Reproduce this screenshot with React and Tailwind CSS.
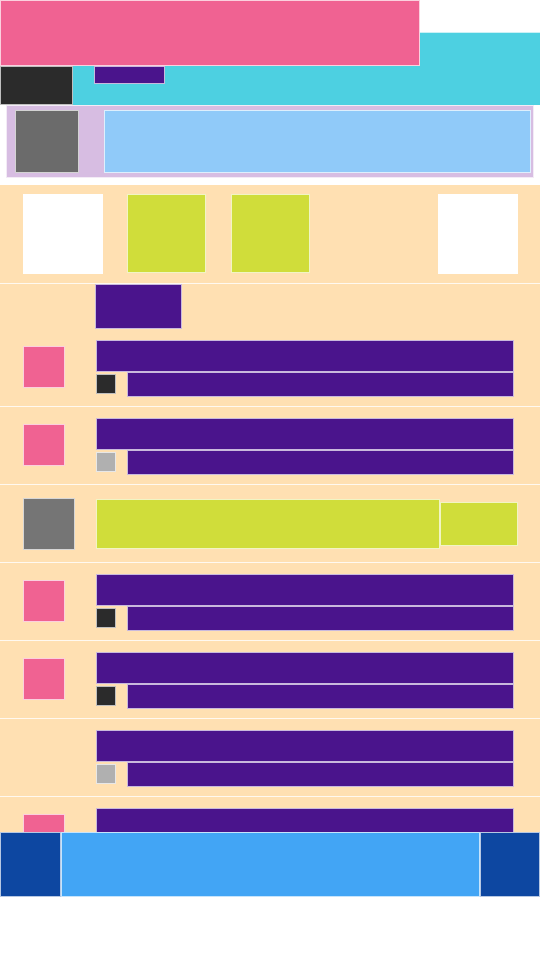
import React from 'react';

const line = 'border border-white/70';

const Item = ({ marker = 'pink', chip = 'dark' }) => (
    <div className="relative h-[78px] border-b border-white/80 flex">
        <div className="w-[96px] shrink-0 pl-[23px] pt-[17px]">
            {marker === 'pink' && <div className={`w-[42px] h-[42px] bg-[#f06292] ${line}`} />}
        </div>
        <div className="w-[418px] pt-[11px] flex flex-col">
            <div className={`h-[32px] bg-[#4a148c] ${line}`} />
            <div className="flex gap-[11px]">
                <div className={`w-[20px] h-[20px] mt-[2px] ${chip === 'dark' ? 'bg-[#2b2b2b]' : 'bg-[#b0b0b0]'} ${line}`} />
                <div className={`flex-1 h-[25px] bg-[#4a148c] ${line}`} />
            </div>
        </div>
    </div>
);

const LimeItem = () => (
    <div className="h-[78px] border-b border-white/80 flex">
        <div className="w-[96px] shrink-0 pl-[23px] pt-[13px]">
            <div className={`w-[52px] h-[52px] bg-[#757575] ${line}`} />
        </div>
        <div className="flex items-start pt-[14px]">
            <div className={`w-[344px] h-[50px] bg-[#d0dd3a] ${line}`} />
            <div className={`w-[78px] h-[44px] mt-[3px] bg-[#d0dd3a] ${line}`} />
        </div>
    </div>
);

export default function App() {
    return (
        <div className="w-[540px] h-[960px] bg-white overflow-hidden">
            {/* Header */}
            <div className="flex">
                <div className={`w-[420px] h-[66px] bg-[#f06292] ${line}`} />
                <div className="flex-1 mt-[32px] bg-[#4dd0e1] border-t border-white/70" />
            </div>
            <div className="flex h-[39px]">
                <div className={`w-[73px] bg-[#2b2b2b] ${line}`} />
                <div className="flex-1 bg-[#4dd0e1] pl-[21px]">
                    <div className={`w-[71px] h-[18px] bg-[#4a148c] ${line}`} />
                </div>
            </div>

            {/* Profile strip */}
            <div className={`mx-[6px] h-[73px] bg-[#d7bde2] ${line} flex items-center pl-[8px] pr-[2px] gap-[25px]`}>
                <div className={`w-[64px] h-[63px] bg-[#6b6b6b] ${line}`} />
                <div className={`flex-1 h-[63px] bg-[#90caf9] ${line}`} />
            </div>

            {/* List area */}
            <div className="mt-[7px] h-[647px] bg-[#ffe0b2] overflow-hidden">
                <div className="h-[99px] border-b border-white/80 flex items-start pt-[9px] pl-[23px] pr-[22px]">
                    <div className="w-[80px] h-[80px] bg-white" />
                    <div className={`ml-[24px] w-[79px] h-[79px] bg-[#d0dd3a] ${line}`} />
                    <div className={`ml-[25px] w-[79px] h-[79px] bg-[#d0dd3a] ${line}`} />
                    <div className="ml-auto w-[80px] h-[80px] bg-white" />
                </div>
                <div className="pl-[95px]">
                    <div className={`w-[87px] h-[45px] bg-[#4a148c] ${line}`} />
                </div>
                <Item chip="dark" />
                <Item chip="light" />
                <LimeItem />
                <Item chip="dark" />
                <Item chip="dark" />
                <Item marker="none" chip="light" />
                <Item chip="dark" />
            </div>

            {/* Bottom nav */}
            <div className="flex h-[65px]">
                <div className={`w-[61px] bg-[#0d47a1] ${line}`} />
                <div className={`flex-1 bg-[#42a5f5] ${line}`} />
                <div className={`w-[60px] bg-[#0d47a1] ${line}`} />
            </div>
        </div>
    );
}
